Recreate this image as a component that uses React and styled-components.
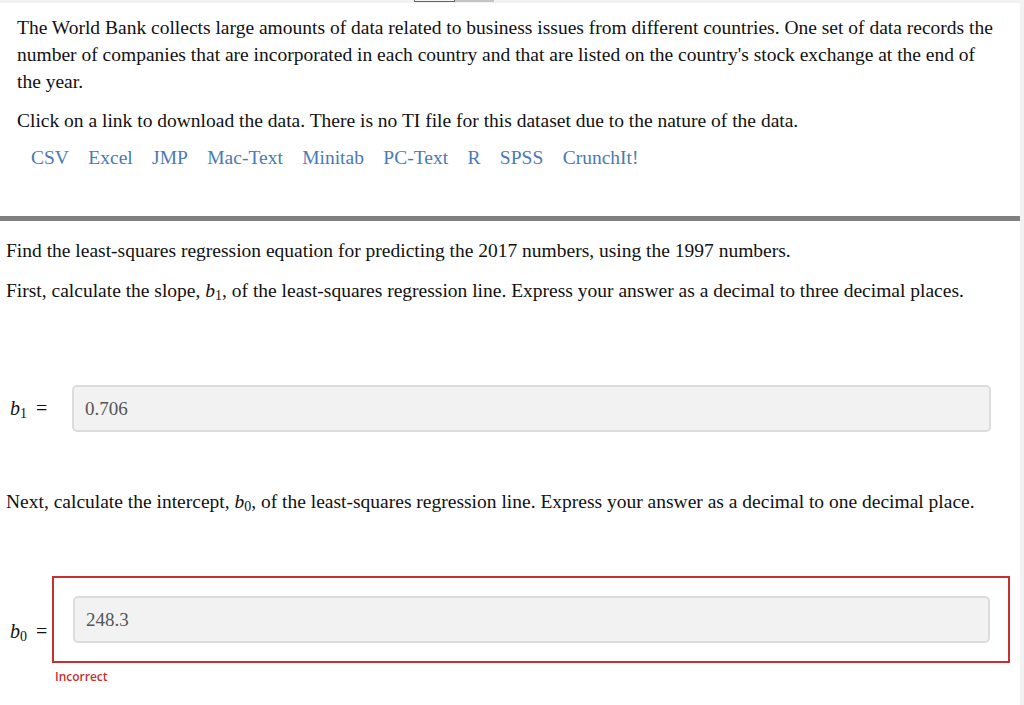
import React from "react";
import styled, { createGlobalStyle } from "styled-components";

const Global = createGlobalStyle`
  html, body { margin: 0; padding: 0; background: #f2f2f2; }
  body { font-family: "Liberation Serif", "Times New Roman", serif; color: #111; }
`;

const Page = styled.div`
  display: flex;
  flex-direction: column;
  width: 1024px;
  min-height: 705px;
  background: #f2f2f2;
`;

const TopStrip = styled.div`
  height: 3px;
  display: flex;
  padding-left: 414px;
`;

const TabMark = styled.div`
  width: ${(p) => p.$w}px;
  height: 2px;
  box-sizing: border-box;
  border: 1px solid ${(p) => (p.$dark ? "#666" : "#c4c4c4")};
  border-top: none;
  background: ${(p) => (p.$dark ? "#f2f2f2" : "#c4c4c4")};
`;

const Main = styled.div`
  width: 1020px;
  background: #fff;
  flex: 1;
`;

const Intro = styled.section`
  padding: 11px 20px 0 17px;
  font-size: 19.5px;
  line-height: 27px;
  height: 213px;
  box-sizing: border-box;
`;

const P = styled.p`
  margin: 0 0 ${(p) => p.$mb || 0}px;
`;

const Links = styled.div`
  display: flex;
  gap: 19.4px;
  padding-left: 14px;
  margin-top: 10px;
`;

const A = styled.a`
  color: #4a7ab4;
  text-decoration: none;
`;

const Rule = styled.hr`
  margin: 0;
  border: none;
  height: 5px;
  background: #808080;
`;

const Question = styled.section`
  padding: 16px 0 0 6px;
  font-size: 19.5px;
  line-height: 27px;
`;

const Var = styled.span`
  font-style: italic;
  font-family: "Liberation Serif", serif;
`;

const Sub = styled.sub`
  font-style: normal;
  font-size: 14px;
  vertical-align: -3px;
  line-height: 0;
`;

const AnswerRow = styled.div`
  display: flex;
  align-items: ${(p) => (p.$end ? "flex-end" : "center")};
  margin: ${(p) => p.$mt}px 0 0 4px;
  width: ${(p) => p.$w}px;
`;

const Label = styled.div`
  width: ${(p) => p.$w}px;
  flex: none;
  font-size: 20px;
  white-space: nowrap;
  padding-bottom: ${(p) => p.$pb || 0}px;
`;

const Eq = styled.span`
  margin-left: ${(p) => p.$ml}px;
`;

const Wrong = styled.div`
  flex: 1;
  border: 2px solid #c6302f;
  padding: 18px 18px 18px 19px;
`;

const Input = styled.div`
  ${(p) => (p.$flex ? "flex: 1;" : "")}
  height: 47px;
  box-sizing: border-box;
  border: 2px solid #dcdcdc;
  border-radius: 5px;
  background: #f2f2f2;
  display: flex;
  align-items: center;
  padding-left: 11px;
  font-family: "Liberation Serif", serif;
  font-size: 19px;
  color: #555;
`;

const Feedback = styled.div`
  margin: 5px 0 0 55px;
  font-family: "Open Sans", "Liberation Sans", sans-serif;
  font-size: 12px;
  font-weight: 600;
  color: #c6302f;
`;

const Scroll = styled.div`
  width: 4px;
`;

const Body = styled.div`
  display: flex;
  flex: 1;
`;

export default function App() {
  return (
    <>
      <Global />
      <Page>
        <TopStrip>
          <TabMark $w={41} $dark />
          <TabMark $w={39} />
        </TopStrip>
        <Body>
          <Main>
            <Intro>
              <P $mb={12}>
                The World Bank collects large amounts of data related to business issues from different countries. One set of data records the number of companies that are incorporated in each country and that are listed on the country's stock exchange at the end of the year.
              </P>
              <P>Click on a link to download the data. There is no TI file for this dataset due to the nature of the data.</P>
              <Links>
                {["CSV", "Excel", "JMP", "Mac-Text", "Minitab", "PC-Text", "R", "SPSS", "CrunchIt!"].map((l) => (
                  <A key={l} href="#">{l}</A>
                ))}
              </Links>
            </Intro>
            <Rule />
            <Question>
              <P $mb={13}>Find the least-squares regression equation for predicting the 2017 numbers, using the 1997 numbers.</P>
              <P>
                First, calculate the slope, <Var>b<Sub>1</Sub></Var>, of the least-squares regression line. Express your answer as a decimal to three decimal places.
              </P>
              <AnswerRow $mt={81} $w={981}>
                <Label $w={62}>
                  <Var>b<Sub>1</Sub></Var><Eq $ml={9}>=</Eq>
                </Label>
                <Input $flex>0.706</Input>
              </AnswerRow>
              <P style={{ marginTop: 56 }}>
                Next, calculate the intercept, <Var>b<Sub>0</Sub></Var>, of the least-squares regression line. Express your answer as a decimal to one decimal place.
              </P>
              <AnswerRow $mt={61} $w={1000} $end>
                <Label $w={42} $pb={18}>
                  <Var>b<Sub>0</Sub></Var><Eq $ml={9}>=</Eq>
                </Label>
                <Wrong>
                  <Input>248.3</Input>
                </Wrong>
              </AnswerRow>
            </Question>
            <Feedback>Incorrect</Feedback>
          </Main>
          <Scroll />
        </Body>
      </Page>
    </>
  );
}
